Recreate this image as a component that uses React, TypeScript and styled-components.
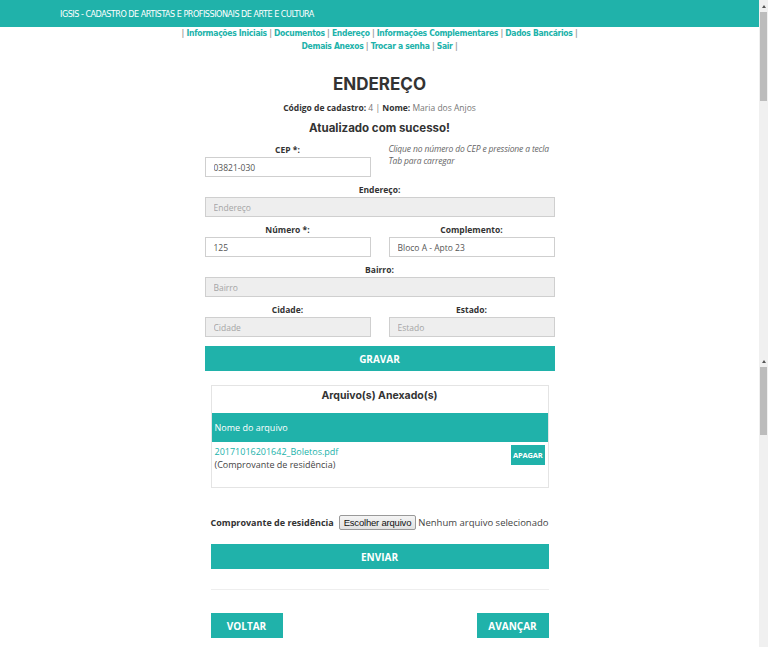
import styled, { createGlobalStyle } from 'styled-components';

const teal = '#20b2aa';

const GlobalStyle = createGlobalStyle`
  html, body {
    margin: 0;
    padding: 0;
    overflow: hidden;
    background: #ffffff;
  }
  * {
    box-sizing: border-box;
  }
`;

const Page = styled.div`
  display: flex;
  width: 768px;
  height: 647px;
  overflow: hidden;
  font-family: "Open Sans", sans-serif;
  color: #333;
`;

const Main = styled.div`
  flex: 1;
  min-width: 0;
  display: flex;
  flex-direction: column;
`;

const TopBar = styled.header`
  height: 27px;
  flex-shrink: 0;
  background-color: ${teal};
  display: flex;
  align-items: center;
  padding-left: 60px;
  color: #ffffff;
  font-family: "Liberation Sans Narrow", "DejaVu Sans Condensed", "Open Sans", sans-serif;
  font-size: 9px;
  letter-spacing: -0.5px;
`;

const Nav = styled.nav`
  width: 420px;
  margin: 0 auto;
  text-align: center;
  font-family: "Liberation Sans Narrow", "DejaVu Sans Condensed", "Open Sans", sans-serif;
  font-size: 8.5px;
  letter-spacing: -0.3px;
  font-weight: bold;
  line-height: 13px;
  color: #999;
`;

const NavLink = styled.a`
  color: ${teal};
  text-decoration: none;
`;

const Content = styled.section`
  width: 350px;
  margin: 0 auto;
  display: flex;
  flex-direction: column;
  align-items: stretch;
`;

const Title = styled.h1`
  margin: 21px 0 0;
  text-align: center;
  font-family: Inter, "DejaVu Sans", sans-serif;
  font-weight: 700;
  font-size: 17px;
  line-height: 20px;
  color: #333;
`;

const Info = styled.p`
  margin: 8px 0 0;
  text-align: center;
  font-size: 8.5px;
  line-height: 12px;
  color: #777;

  b {
    color: #333;
  }
`;

const Success = styled.h2`
  margin: 5px 0 0;
  text-align: center;
  font-family: Inter, "DejaVu Sans", sans-serif;
  font-weight: 700;
  font-size: 11.5px;
  line-height: 18px;
  color: #333;
`;

const FormGrid = styled.div`
  margin-top: 6px;
  display: grid;
  grid-template-columns: 1fr 1fr;
  column-gap: 18px;
  row-gap: 6px;
`;

const Field = styled.div<{ $full?: boolean }>`
  grid-column: ${p => (p.$full ? '1 / span 2' : 'auto')};
  display: flex;
  flex-direction: column;
`;

const Label = styled.label`
  text-align: center;
  font-size: 8.5px;
  font-weight: bold;
  line-height: 14px;
  color: #333;
`;

const Input = styled.input`
  height: 20px;
  border: 1px solid #cfcfcf;
  padding: 0 8px;
  font-family: "Open Sans", sans-serif;
  font-size: 8.5px;
  color: #555;
  background: ${p => (p.disabled ? '#eeeeee' : '#ffffff')};
  outline: none;

  &::placeholder {
    color: #a5a5a5;
  }
`;

const Hint = styled.p`
  margin: 0;
  font-size: 8.5px;
  letter-spacing: -0.15px;
  line-height: 12px;
  font-style: italic;
  color: #666;
`;

const Button = styled.button<{ $width?: string }>`
  width: ${p => p.$width || '100%'};
  height: 25px;
  border: none;
  background-color: ${teal};
  color: #ffffff;
  font-family: "Open Sans", sans-serif;
  font-weight: bold;
  font-size: 10px;
  text-transform: uppercase;
  cursor: pointer;
`;

const SaveButton = styled(Button)`
  margin-top: 9px;
`;

const Inner = styled.div`
  width: 338px;
  margin: 0 auto;
  display: flex;
  flex-direction: column;
`;

const FilesBox = styled.div`
  margin-top: 14px;
  height: 103px;
  border: 1px solid #e4e4e4;
`;

const FilesTitle = styled.div`
  height: 27px;
  display: flex;
  justify-content: center;
  padding-top: 3px;
  font-family: Inter, "DejaVu Sans", sans-serif;
  font-weight: 700;
  font-size: 10.5px;
  color: #333;
`;

const FilesHead = styled.div`
  height: 29px;
  background-color: ${teal};
  color: #ffffff;
  display: flex;
  align-items: center;
  padding-left: 3px;
  font-size: 9px;
`;

const FileRow = styled.div`
  display: flex;
  justify-content: space-between;
  align-items: flex-start;
  padding: 3px 3px 0 3px;
`;

const FileInfo = styled.div`
  font-size: 9px;
  line-height: 13px;
  color: #444;
`;

const FileLink = styled.a`
  display: block;
  color: ${teal};
  text-decoration: none;
`;

const SmallButton = styled.button`
  height: 20px;
  padding: 0 2px;
  border: none;
  background-color: ${teal};
  color: #ffffff;
  font-family: "Open Sans", sans-serif;
  font-weight: bold;
  font-size: 7.5px;
  letter-spacing: -0.2px;
`;

const UploadRow = styled.div`
  margin-top: 27px;
  display: flex;
  align-items: center;
  justify-content: space-between;
`;

const UploadLabel = styled.span`
  font-size: 9px;
  font-weight: bold;
  color: #333;
`;

const FilePicker = styled.div`
  display: flex;
  align-items: center;
  gap: 2px;
  font-size: 9.5px;
  color: #444;
`;

const PickButton = styled.span`
  display: inline-block;
  padding: 1px 4px;
  border: 1px solid #999;
  border-radius: 2px;
  background: linear-gradient(#f4f4f4, #e2e2e2);
  font-family: "Liberation Sans", Arial, sans-serif;
  font-size: 9.5px;
  letter-spacing: -0.2px;
  color: #111;
`;

const SendButton = styled(Button)`
  margin-top: 14px;
`;

const Divider = styled.hr`
  margin: 20px 0 0;
  border: none;
  border-top: 1px solid #eeeeee;
`;

const Footer = styled.div`
  margin-top: 23px;
  display: flex;
  justify-content: space-between;
`;

const Scrollbar = styled.div`
  width: 9px;
  flex-shrink: 0;
  background: #f0f0f0;
  display: flex;
  flex-direction: column;
  align-items: center;
`;

const Arrow = styled.div`
  width: 0;
  height: 0;
  margin: 5px 0 4px;
  border-left: 2px solid transparent;
  border-right: 2px solid transparent;
  border-bottom: 3px solid #555;
`;

const Thumb = styled.div<{ $h: number }>`
  width: 7px;
  height: ${p => p.$h}px;
  background: #bcbcbc;
`;

const Gap = styled.div<{ $h: number }>`
  height: ${p => p.$h}px;
`;

const navItems1 = ['Informações Iniciais', 'Documentos', 'Endereço', 'Informações Complementares', 'Dados Bancários'];
const navItems2 = ['Demais Anexos', 'Trocar a senha', 'Sair'];

export default function App() {
  return (
    <Page>
      <GlobalStyle />
      <Main>
        <TopBar>IGSIS - CADASTRO DE ARTISTAS E PROFISSIONAIS DE ARTE E CULTURA</TopBar>
        <Nav>
          {'| '}
          {navItems1.map(item => (
            <span key={item}>
              <NavLink href="#">{item}</NavLink>{' | '}
            </span>
          ))}
          <br />
          {navItems2.map(item => (
            <span key={item}>
              <NavLink href="#">{item}</NavLink>{' | '}
            </span>
          ))}
        </Nav>

        <Content>
          <Title>ENDEREÇO</Title>
          <Info>
            <b>Código de cadastro:</b> 4 | <b>Nome:</b> Maria dos Anjos
          </Info>
          <Success>Atualizado com sucesso!</Success>

          <FormGrid>
            <Field>
              <Label>CEP *:</Label>
              <Input defaultValue="03821-030" />
            </Field>
            <Hint>Clique no número do CEP e pressione a tecla Tab para carregar</Hint>

            <Field $full>
              <Label>Endereço:</Label>
              <Input disabled placeholder="Endereço" />
            </Field>

            <Field>
              <Label>Número *:</Label>
              <Input defaultValue="125" />
            </Field>
            <Field>
              <Label>Complemento:</Label>
              <Input defaultValue="Bloco A - Apto 23" />
            </Field>

            <Field $full>
              <Label>Bairro:</Label>
              <Input disabled placeholder="Bairro" />
            </Field>

            <Field>
              <Label>Cidade:</Label>
              <Input disabled placeholder="Cidade" />
            </Field>
            <Field>
              <Label>Estado:</Label>
              <Input disabled placeholder="Estado" />
            </Field>
          </FormGrid>

          <SaveButton>Gravar</SaveButton>

          <Inner>
            <FilesBox>
              <FilesTitle>Arquivo(s) Anexado(s)</FilesTitle>
              <FilesHead>Nome do arquivo</FilesHead>
              <FileRow>
                <FileInfo>
                  <FileLink href="#">20171016201642_Boletos.pdf</FileLink>
                  (Comprovante de residência)
                </FileInfo>
                <SmallButton>APAGAR</SmallButton>
              </FileRow>
            </FilesBox>

            <UploadRow>
              <UploadLabel>Comprovante de residência</UploadLabel>
              <FilePicker>
                <PickButton>Escolher arquivo</PickButton>
                Nenhum arquivo selecionado
              </FilePicker>
            </UploadRow>

            <SendButton>Enviar</SendButton>
            <Divider />

            <Footer>
              <Button $width="72px">Voltar</Button>
              <Button $width="72px">Avançar</Button>
            </Footer>
          </Inner>
        </Content>
      </Main>
      <Scrollbar>
        <Arrow />
        <Thumb $h={89} />
        <Gap $h={254} />
        <Arrow />
        <Thumb $h={68} />
      </Scrollbar>
    </Page>
  );
}
